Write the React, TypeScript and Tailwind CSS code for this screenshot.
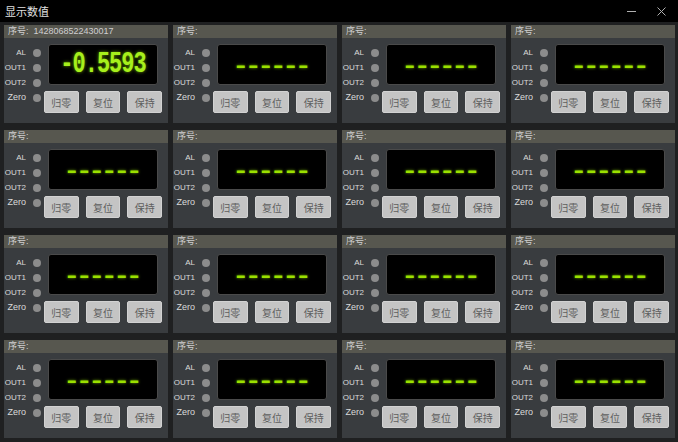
import React from "react";

const labels = ["AL", "OUT1", "OUT2", "Zero"];

function Card({ serial, value }: { serial?: string; value?: string }) {
  return (
    <div className="flex flex-col bg-[#393c3f] min-w-0">
      <div className="h-[13px] bg-[#57574f] flex items-center pl-[4px] text-[9px] leading-none text-[#cfcfcf] whitespace-nowrap">
        <span>序号:</span>
        {serial && <span className="ml-[5px]">{serial}</span>}
      </div>
      <div className="flex flex-1">
        <div className="w-[40px] flex flex-col pt-[7px]">
          {labels.map((l) => (
            <div key={l} className="h-[15px] flex items-center justify-end pr-[3px]">
              <span
                className={
                  (l === "Zero" ? "text-[9px]" : "text-[8px]") +
                  " leading-none text-[#dadada] font-medium"
                }
              >
                {l}
              </span>
              <span className="ml-[7px] w-[8px] h-[8px] rounded-full bg-[#8c8c8c]" />
            </div>
          ))}
        </div>
        <div className="w-[118px] flex flex-col pt-[6px]">
          <div className="mx-[4px] h-[41px] bg-black rounded-[3px] border border-[#4a4a4a] flex items-center justify-center overflow-hidden">
            {value ? (
              <span className="font-['Liberation_Mono',monospace] font-bold text-[22px] leading-none tracking-[-1px] text-[#a6ef1c] scale-y-[1.3] [text-shadow:0_0_3px_#6fa800]">
                {value}
              </span>
            ) : (
              <span className="font-['DejaVu_Sans',sans-serif] font-bold text-[20px] leading-none tracking-[2.5px] pl-[2.5px] text-[#9be000] [text-shadow:0_0_3px_#6fa800]">
                ––––––
              </span>
            )}
          </div>
          <div className="mt-[6px] flex gap-[7px]">
            {["归零", "复位", "保持"].map((b) => (
              <div
                key={b}
                className="flex-1 h-[22px] rounded-[2px] bg-[#c4c4c4] border border-[#d2d2d2] flex items-center justify-center text-[10px] text-[#5e5e5e] font-['Noto_Sans_CJK_SC',sans-serif]"
              >
                {b}
              </div>
            ))}
          </div>
        </div>
      </div>
    </div>
  );
}

export default function App() {
  const cards = Array.from({ length: 16 }, (_, i) => i);
  return (
    <div className="w-[678px] h-[442px] bg-[#1f2021] flex flex-col overflow-hidden font-['Liberation_Sans','Noto_Sans_CJK_SC',sans-serif]">
      <div className="h-[22px] shrink-0 bg-black flex items-center pl-[5px] pr-[12px]">
        <span className="flex-1 text-[11px] text-[#e0e0e0] font-['Noto_Sans_CJK_SC',sans-serif]">显示数值</span>
        <div className="w-[9px] h-[1px] bg-[#b0b0b0] mr-[21px]" />
        <svg width="9" height="9" viewBox="0 0 9 9" className="mt-[1px]">
          <path d="M0.5 0.5 L8.5 8.5 M8.5 0.5 L0.5 8.5" stroke="#b0b0b0" strokeWidth="1" />
        </svg>
      </div>
      <div className="flex-1 grid grid-cols-4 grid-rows-4 gap-x-[5px] gap-y-[7px] pt-[3px] pb-[4px] pl-[4px] pr-[3px]">
        {cards.map((i) => (
          <Card key={i} serial={i === 0 ? "1428068522430017" : undefined} value={i === 0 ? "-0.5593" : undefined} />
        ))}
      </div>
    </div>
  );
}
